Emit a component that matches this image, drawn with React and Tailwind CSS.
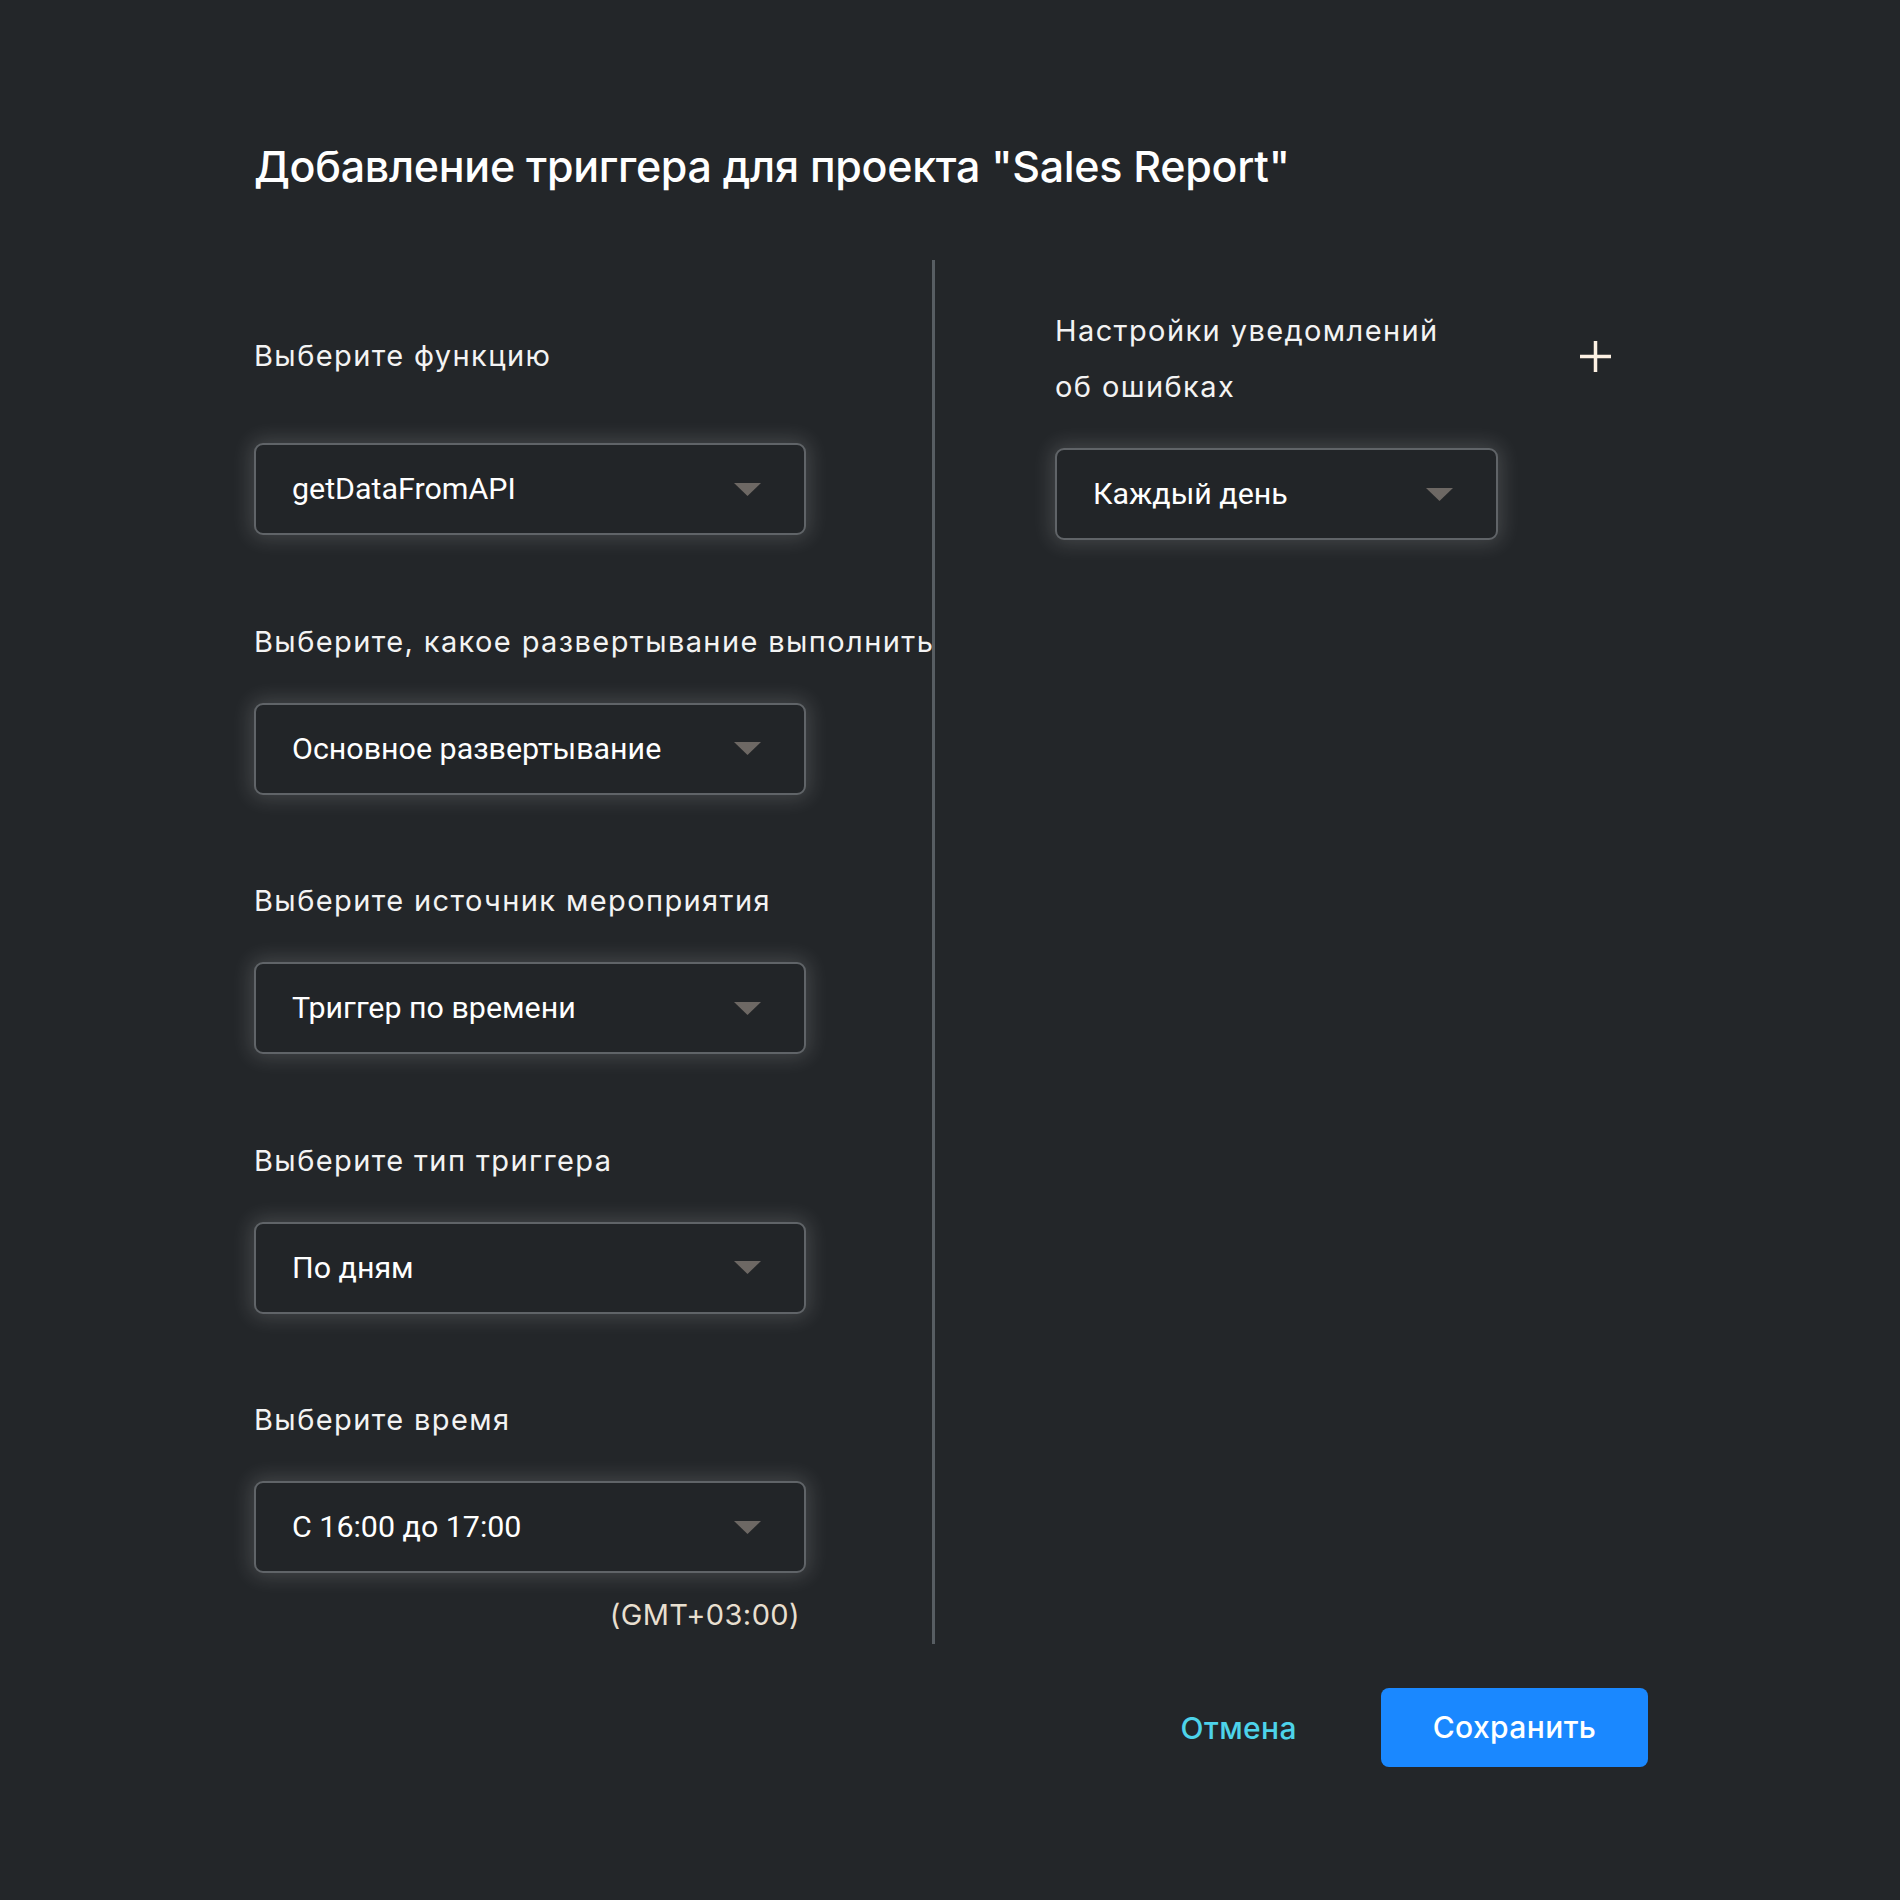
import React from "react";

function Arrow() {
  return (
    <svg width="27" height="13" viewBox="0 0 27 13" className="shrink-0">
      <polygon points="0,0 27,0 13.5,13" fill="#6d6864" />
    </svg>
  );
}

function Select({ value, width = "w-[552px]" }) {
  return (
    <div
      className={`${width} h-[92px] flex items-center justify-between rounded-[9px] border-2 border-[#606468] bg-[#222528] pl-[36px] pr-[43px] shadow-[0_0_20px_4px_rgba(255,255,255,0.15)]`}
    >
      <span className="text-[30.4px] leading-[40px] text-white" style={{ fontFamily: "Roboto, sans-serif" }}>
        {value}
      </span>
      <Arrow />
    </div>
  );
}

function Group({ label, value, first }) {
  return (
    <div className="flex flex-col">
      <div
        className={`${first ? "mt-[76px]" : "mt-[86.5px]"} h-[40px] leading-[40px] text-[29px] tracking-[1.4px] text-[#f3f3f3] whitespace-nowrap`}
      >
        {label}
      </div>
      <div className={first ? "mt-[67px]" : "mt-[41px]"}>
        <Select value={value} />
      </div>
    </div>
  );
}

export default function App() {
  return (
    <div
      className="w-[1900px] h-[1900px] bg-[#232629] pl-[254px] pt-[138px]"
      style={{ fontFamily: "Inter, 'Noto Sans', sans-serif" }}
    >
      <div className="h-[56px] leading-[56px] text-[43px] font-medium text-white whitespace-nowrap tracking-[-0.3px]">
        Добавление триггера для проекта "Sales Report"
      </div>

      <div className="mt-[66px] flex items-start">
        <div className="w-[678px] flex flex-col">
          <Group first label="Выберите функцию" value="getDataFromAPI" />
          <Group label="Выберите, какое развертывание выполнить" value="Основное развертывание" />
          <Group label="Выберите источник мероприятия" value="Триггер по времени" />
          <Group label="Выберите тип триггера" value="По дням" />
          <Group label="Выберите время" value="С 16:00 до 17:00" />
          <div className="mt-[22px] w-[546px] h-[40px] leading-[40px] text-right text-[29px] tracking-[0.4px] text-[#e8dfcf]">
            (GMT+03:00)
          </div>
        </div>

        <div className="w-[3px] h-[1384px] bg-[#575d62]" />

        <div className="ml-[120px] flex flex-col">
          <div className="mt-[43px] w-[556px] flex items-center justify-between">
            <div className="text-[29px] tracking-[1.4px] leading-[56px] text-[#f3f3f3] whitespace-nowrap">
              Настройки уведомлений
              <br />
              об ошибках
            </div>
            <svg width="31" height="31" viewBox="0 0 31 31" className="shrink-0 mb-[5px]">
              <rect x="0" y="13.75" width="31" height="3.5" fill="#fdf1e3" />
              <rect x="13.75" y="0" width="3.5" height="31" fill="#fdf1e3" />
            </svg>
          </div>
          <div className="mt-[33px]">
            <Select value="Каждый день" width="w-[443px]" />
          </div>
        </div>
      </div>

      <div className="mt-[44px] w-[1394px] flex items-center justify-end">
        <button className="text-[30px] tracking-[0.4px] font-medium text-[#4dd3ea] leading-[40px]">Отмена</button>
        <button className="ml-[84px] w-[267px] h-[79px] rounded-[8px] bg-[#1a88ff] text-[30px] tracking-[0.4px] font-medium text-white">
          Сохранить
        </button>
      </div>
    </div>
  );
}
